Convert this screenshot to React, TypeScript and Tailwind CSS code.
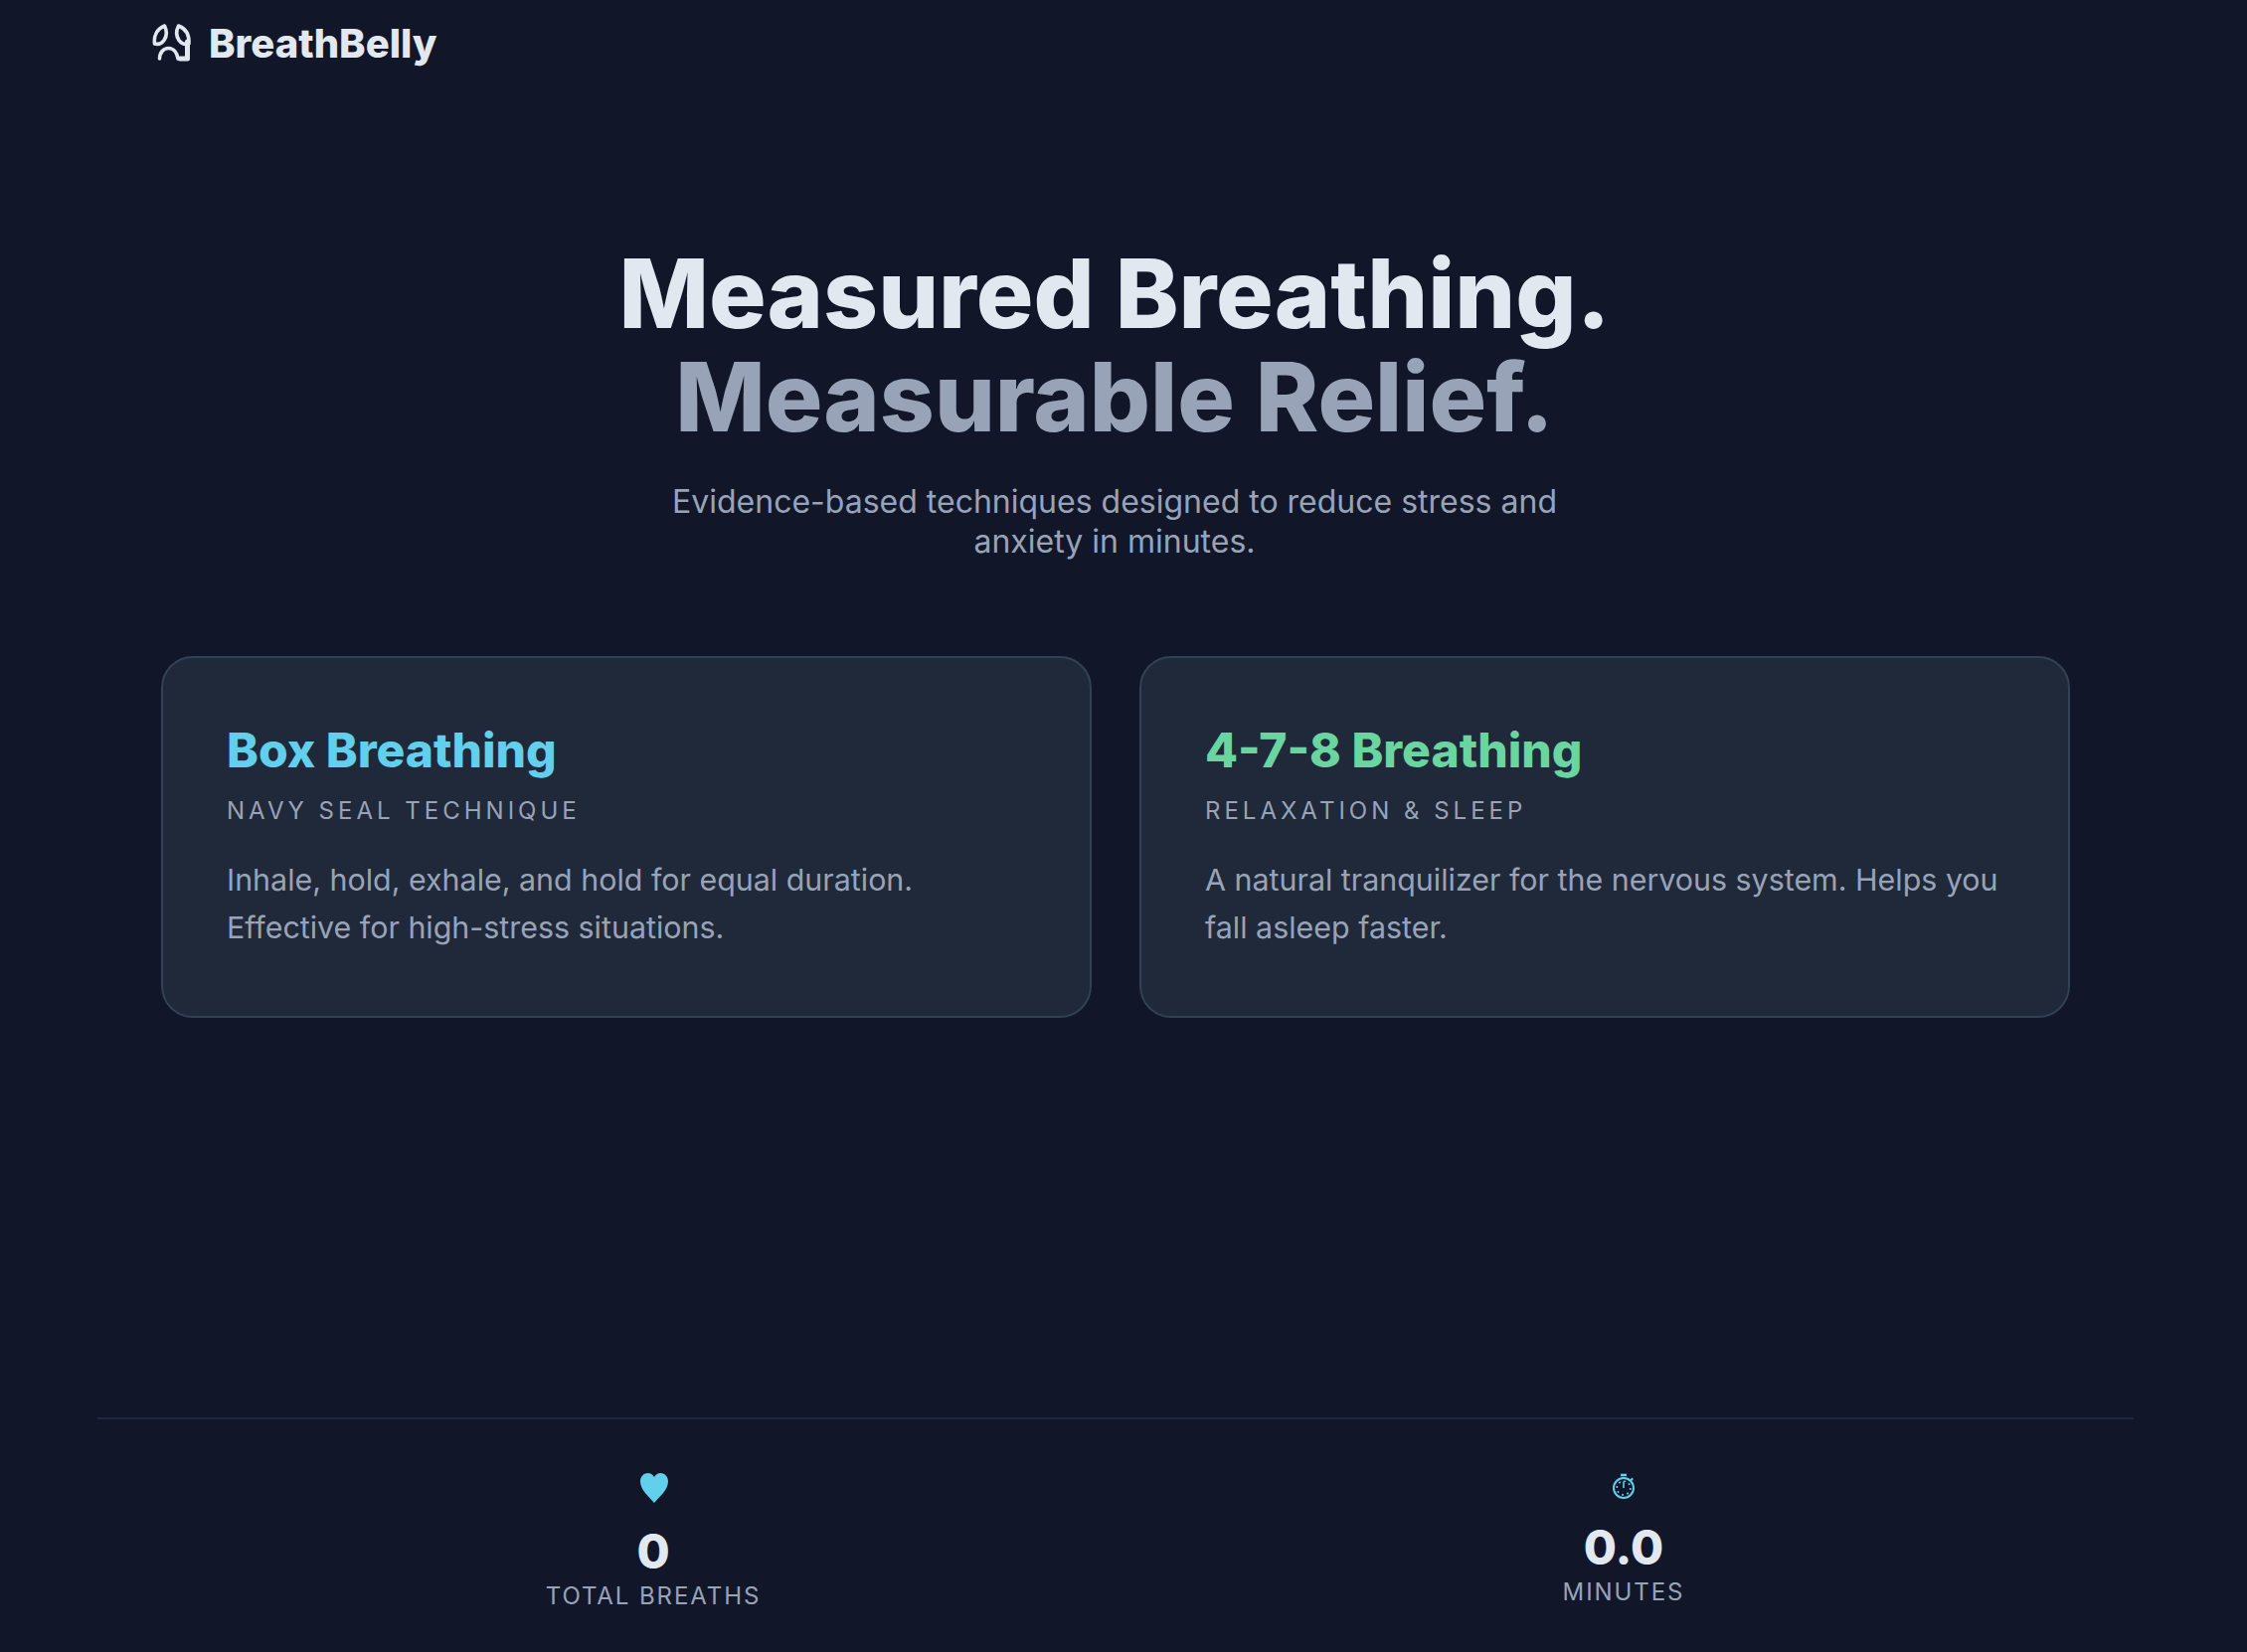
import React from 'react';

const LungsIcon = () => (
  <svg width="40" height="44" viewBox="153 22 40 44" fill="none" stroke="#e2e8f0" strokeWidth="3.600" strokeLinejoin="round" strokeLinecap="round">
    <path d="M155.500 44C154.500 36 158 29 165.500 26 168 31 168 36 165 40.500 162.500 44 159 45 155.500 44z" />
    <path d="M190 44C190.500 36 187.500 29 179.500 26 177 31 177 36 180 40.500 182.500 44 186.500 45 190 44z" />
    <path d="M160.500 59C160.500 53 164.500 48.500 169.500 48.500S178 53 179 59" />
    <path d="M188.500 42V59H181" strokeWidth="5" />
  </svg>
);

const HeartIcon = () => (
  <svg width="28" height="30" viewBox="0 0 28 30" fill="#62cfec" className="ml-[1px]">
    <path d="M14 30C9 24 0 17 0 8.500 0 3.500 3.500 0 7.500 0 10.200 0 12.600 1.500 14 4 15.400 1.500 17.800 0 20.500 0 24.500 0 28 3.500 28 8.500 28 17 19 24 14 30z" />
  </svg>
);

const TimerIcon = () => (
  <svg width="24" height="26" viewBox="0 0 24 26" fill="none" stroke="#62cfec">
    <path d="M9 2h6" strokeWidth="2.600" />
    <path d="M19.500 5.500l1.500 1.500" strokeWidth="2.600" />
    <circle cx="12" cy="15" r="10" strokeWidth="2" />
    <path d="M12 8.500v6.500" strokeWidth="1.600" />
    <circle cx="12" cy="15" r="6.800" strokeWidth="1.800" strokeDasharray="1.800 3.540" />
  </svg>
);

const techniques = [
  {
    name: 'Box Breathing',
    color: 'text-[#62cfec]',
    tag: 'NAVY SEAL TECHNIQUE',
    text: 'Inhale, hold, exhale, and hold for equal duration. Effective for high-stress situations.',
  },
  {
    name: '4-7-8 Breathing',
    color: 'text-[#6ad5a0]',
    tag: 'RELAXATION & SLEEP',
    text: 'A natural tranquilizer for the nervous system. Helps you fall asleep faster.',
  },
];

export default function App() {
  return (
    <div className="h-[1662px] bg-[#111729] font-['Inter',sans-serif] text-[#e2e8f0] overflow-hidden">
      {/* Header */}
      <header className="flex items-center gap-[17px] pl-[153px] h-[88px]">
        <LungsIcon />
        <span className="text-[40px] font-extrabold leading-none">BreathBelly</span>
      </header>

      {/* Hero */}
      <section className="w-[2242px] pt-[155px] text-center">
        <h1 className="text-[96px] font-extrabold leading-[104px]">
          Measured Breathing.
          <br />
          <span className="text-[#99a3b8]">Measurable Relief.</span>
        </h1>
        <p className="mt-[34px] mx-auto max-w-[900px] text-[32px] leading-[40px] text-[#99a3b8]">
          Evidence-based techniques designed to reduce stress and anxiety in minutes.
        </p>
      </section>

      {/* Technique cards */}
      <section className="grid grid-cols-2 gap-[48px] w-[1920px] ml-[162px] mt-[95px]">
        {techniques.map(t => (
          <div key={t.name} className="h-[364px] bg-[#1f293a] border-2 border-[#334155] rounded-[32px] px-[64px] pt-[65px]">
            <h2 className={`text-[48px] font-extrabold leading-[56px] ${t.color}`}>{t.name}</h2>
            <div className="mt-[17px] text-[24px] leading-[32px] tracking-[4px] text-[#99a3b8]">{t.tag}</div>
            <p className="mt-[29px] text-[30.4px] leading-[48px] text-[#99a3b8]">{t.text}</p>
          </div>
        ))}
      </section>

      {/* Stats */}
      <footer className="w-[2048px] ml-[98px] mt-[402px] border-t-2 border-[#1e293b] grid grid-cols-[1118px_834px] pt-[54px]">
        <div className="flex flex-col items-center">
          <HeartIcon />
          <div className="mt-[21px] text-[48px] font-extrabold leading-[56px]">0</div>
          <div className="mt-[1px] text-[24px] leading-[32px] tracking-[1.92px] text-[#99a3b8]">TOTAL BREATHS</div>
        </div>
        <div className="flex flex-col items-center">
          <TimerIcon />
          <div className="mt-[21px] text-[48px] font-extrabold leading-[56px]">0.0</div>
          <div className="mt-[1px] text-[24px] leading-[32px] tracking-[1.92px] text-[#99a3b8]">MINUTES</div>
        </div>
      </footer>
    </div>
  );
}
